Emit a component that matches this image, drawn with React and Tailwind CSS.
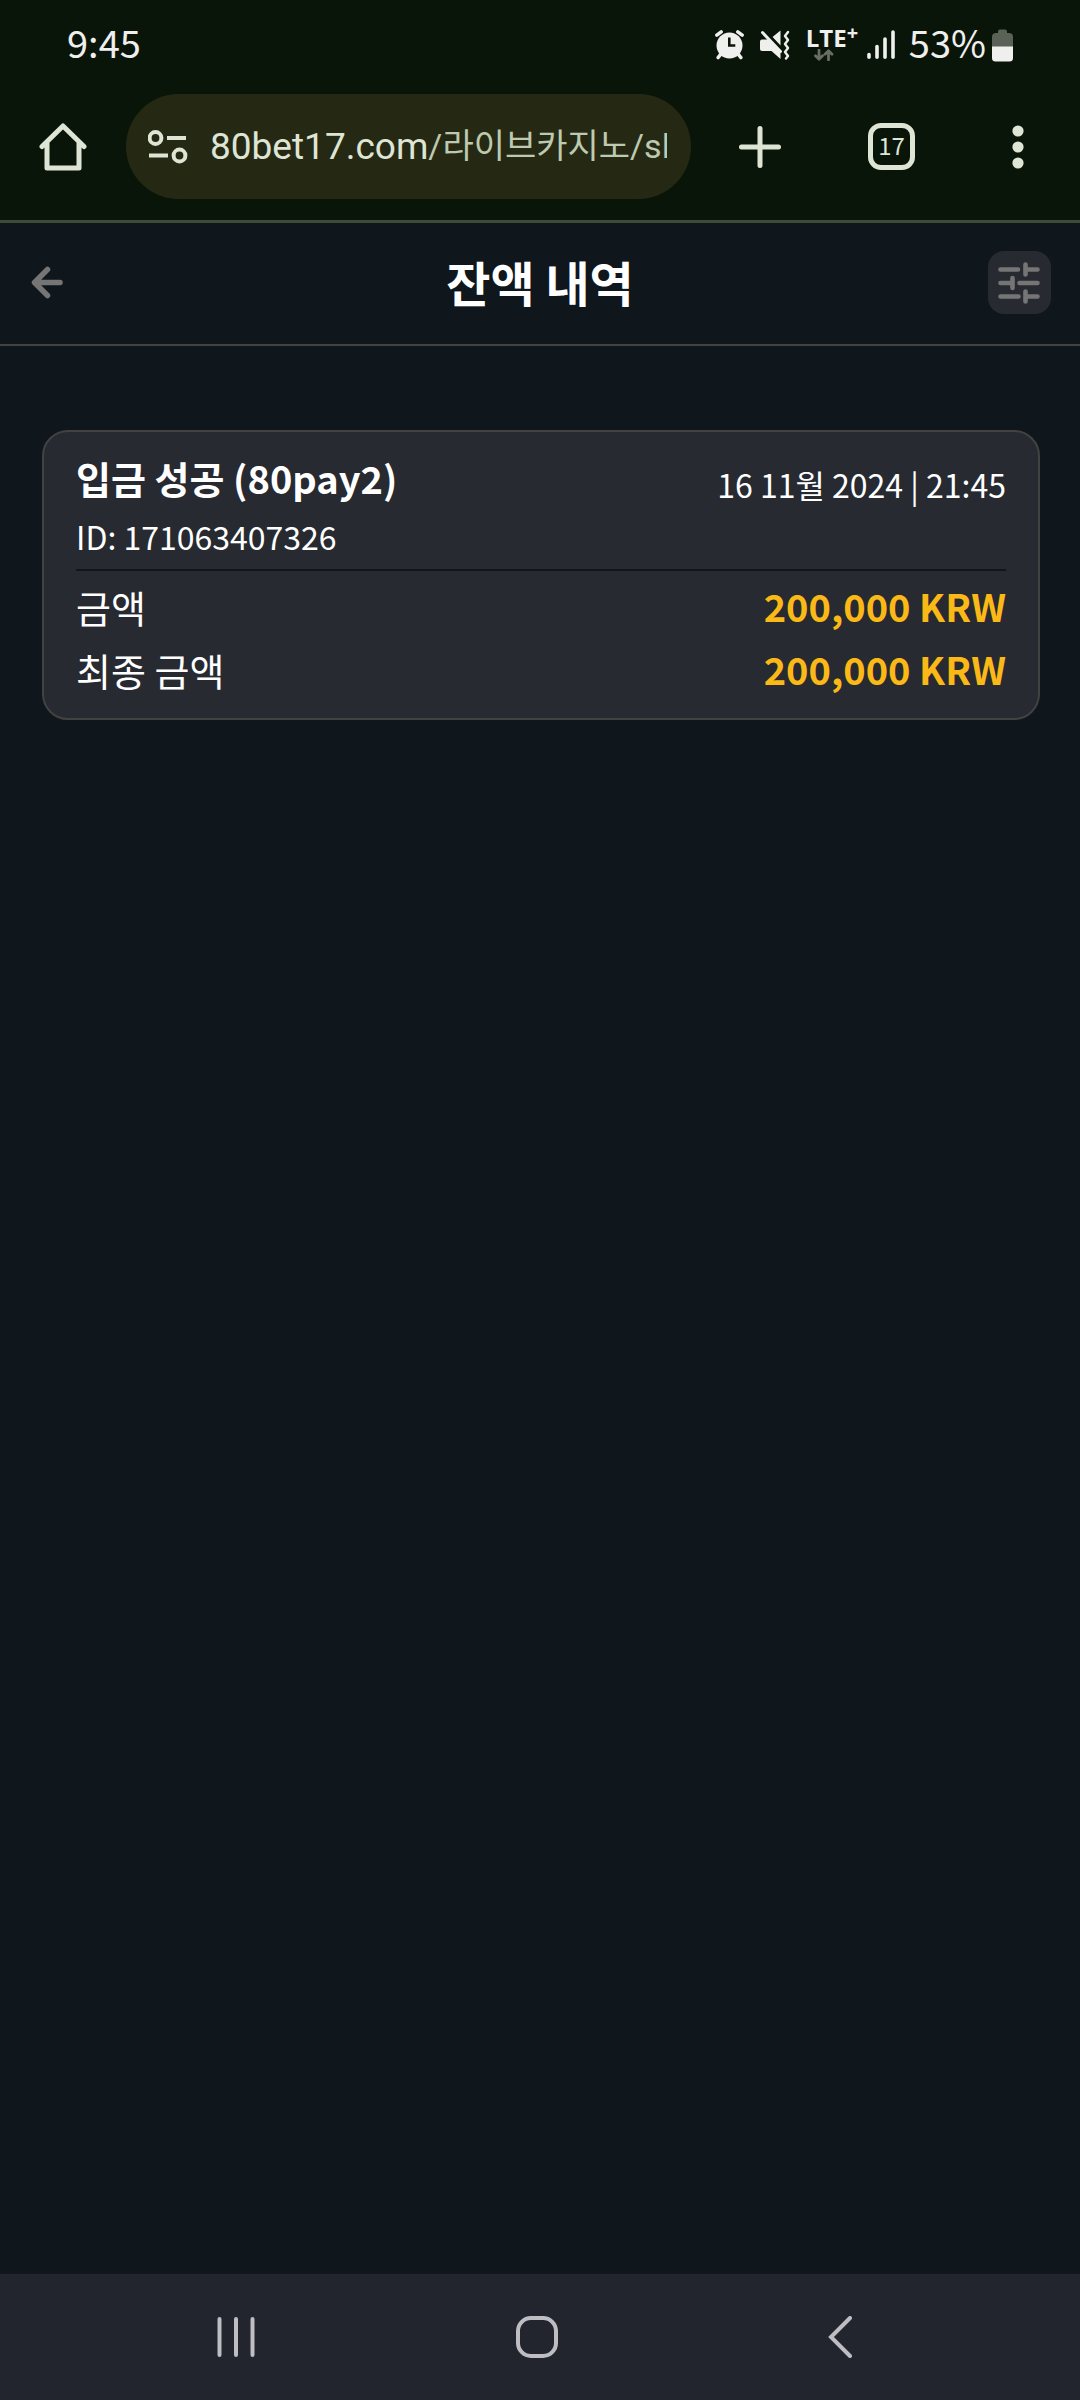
import React from "react";

const cjk = "font-['Noto_Sans_CJK_KR',sans-serif]";

function AlarmIcon() {
  return (
    <svg width="29" height="30" viewBox="0 0 29 30" fill="none" aria-hidden="true">
      <circle cx="14.5" cy="15.5" r="13" fill="#efefee" />
      <path d="M1.8 5.2 6.2 1.8M27.2 5.2l-4.4-3.4" stroke="#efefee" strokeWidth="3.4" strokeLinecap="round" />
      <path d="m5.5 24.5-2.3 3M23.5 24.5l2.3 3" stroke="#efefee" strokeWidth="3.6" strokeLinecap="round" />
      <path d="M14.3 7.5v8h6" stroke="#0a1509" strokeWidth="2.6" />
    </svg>
  );
}

function MuteVibrateIcon() {
  return (
    <svg width="30" height="30" viewBox="0 0 30 30" fill="none" aria-hidden="true">
      <path d="M20.5.5v15L12.5 7Z" fill="#efefee" />
      <path d="M2 9.5h6l12.5 13V29l-9-8H2Q0 21 0 19v-7.500Q0 9.500 2 9.500Z" fill="#efefee" />
      <path d="m2.500 2.500 18 19" stroke="#efefee" strokeWidth="3" strokeLinecap="round" />
      <path d="m8 4 13.500 14" stroke="#0a1509" strokeWidth="1.600" />
      <path d="m28 2-3 4 3 4-3 4 3 4-3 4 3 4-2 2.500" stroke="#efefee" strokeWidth="2.400" strokeLinecap="round" strokeLinejoin="round" />
    </svg>
  );
}

function DataArrows() {
  return (
    <svg width="20" height="12" viewBox="0 0 20 12" fill="none" stroke="#686d65" strokeWidth="2.800" strokeLinecap="round" strokeLinejoin="round" aria-hidden="true">
      <path d="M5 1v9M1.500 6.800 5 10.300l3.500-3.500M14.500 11V2M11 5.300l3.500-3.500L18 5.300" />
    </svg>
  );
}

function SignalIcon() {
  return (
    <svg width="28" height="30" viewBox="0 0 28 30" stroke="#efefee" strokeWidth="3.600" strokeLinecap="round" aria-hidden="true">
      <path d="M2 24.500v2.700M10 16.500v10.700M18 9v18.200M26 2v25.200" />
    </svg>
  );
}

function BatteryIcon() {
  return (
    <svg width="21" height="33" viewBox="0 0 21 33" aria-hidden="true">
      <path d="M6 4V2.500Q6 .5 8 .5h5q2 0 2 2V4h2q4 0 4 4v10H0V8q0-4 4-4Z" fill="#5a6156" />
      <path d="M0 17.500h21V29q0 3.500-3.500 3.500h-14Q0 32.500 0 29Z" fill="#efefee" />
    </svg>
  );
}

function StatusBar() {
  return (
    <div className={`flex h-[94px] items-center justify-between pr-[67px] pb-1 pl-[67px] text-[38px] leading-none text-[#efefee] ${cjk}`}>
      <time className="pb-1.5">9:45</time>
      <div className="flex items-center">
        <AlarmIcon />
        <span className="ml-4 flex"><MuteVibrateIcon /></span>
        <div className="ml-4 flex h-9 w-[51px] flex-col">
          <span className="flex items-start font-['Open_Sans',sans-serif] text-2xl leading-[22px] font-bold">
            LTE<span className="text-xl leading-3">+</span>
          </span>
          <span className="ml-2 flex"><DataArrows /></span>
        </div>
        <span className="ml-2.5 flex"><SignalIcon /></span>
        <span className="ml-3.5 pb-1.5">53%</span>
        <span className="ml-1.5 flex"><BatteryIcon /></span>
      </div>
    </div>
  );
}

function BrowserBar() {
  return (
    <div className="flex h-[105px] items-center text-[#dfe5d5]">
      <button aria-label="홈" className="flex w-[126px] justify-center">
        <svg width="48" height="48" viewBox="0 0 48 48" fill="none" stroke="currentColor" strokeWidth="5" strokeLinecap="round" strokeLinejoin="round" aria-hidden="true">
          <path d="M3 23.500 24 3l21 20.500M8 20v25h32V20" />
        </svg>
      </button>
      <div className="flex h-full min-w-0 flex-1 items-center rounded-full bg-[#252914] pr-6 pl-[22px]">
        <button aria-label="사이트 정보" className="shrink-0">
          <svg width="40" height="34" viewBox="0 0 40 34" fill="none" stroke="currentColor" strokeWidth="4" aria-hidden="true">
            <circle cx="7.500" cy="8" r="5.900" />
            <circle cx="31.500" cy="25.500" r="5.900" />
            <path d="M19 8h19M1 25.500h19" />
          </svg>
        </button>
        <label htmlFor="address" className="ml-[22px] shrink-0 font-['Roboto',sans-serif] text-[37px]">80bet17.com</label>
        <input
          id="address"
          defaultValue="/라이브카지노/sl"
          className="min-w-0 flex-1 bg-transparent font-['Roboto','Noto_Sans_CJK_KR',sans-serif] text-[34px] text-[#bdcab0] outline-none"
        />
      </div>
      <button aria-label="새 탭" className="flex w-[137px] justify-center">
        <svg width="42" height="42" viewBox="0 0 42 42" stroke="currentColor" strokeWidth="5" strokeLinecap="round" aria-hidden="true">
          <path d="M21 2.500v37M2.500 21h37" />
        </svg>
      </button>
      <button aria-label="탭 17개" className="flex w-[127px] justify-center">
        <span className="flex size-[47px] items-center justify-center rounded-[13px] border-5 border-current pb-1 font-['Noto_Sans_CJK_KR',sans-serif] text-2xl leading-none">17</span>
      </button>
      <button aria-label="메뉴" className="flex w-[125px] justify-center">
        <svg width="12" height="44" viewBox="0 0 12 44" fill="currentColor" aria-hidden="true">
          <circle cx="6" cy="6" r="5.600" />
          <circle cx="6" cy="22" r="5.600" />
          <circle cx="6" cy="38" r="5.600" />
        </svg>
      </button>
    </div>
  );
}

function PageHeader() {
  return (
    <header className="flex h-[123px] items-center justify-between border-b-2 border-[#424242] px-[29px] pb-0.5">
      <button aria-label="뒤로" className="flex size-[63px] items-center">
        <svg width="36" height="34" viewBox="0 0 36 34" fill="none" stroke="#757575" strokeWidth="5.500" strokeLinecap="round" strokeLinejoin="round" aria-hidden="true">
          <path d="M18.500 3.500 5.500 16.500l13 13M7 16.500h24" />
        </svg>
      </button>
      <h1 className="pb-1 text-5xl leading-none font-bold">잔액 내역</h1>
      <button aria-label="필터" className="flex size-[63px] items-center justify-center rounded-2xl bg-[#272a31]">
        <svg width="42" height="42" viewBox="0 0 42 42" fill="none" stroke="#757575" strokeWidth="4.600" strokeLinecap="round" aria-hidden="true">
          <path d="M2.500 7.500h17.500M27.500 2.500v10M27.500 7.500h12M2.500 21h12M14.500 16v10M21.500 21h18M2.500 34.500h18M27.500 29.500v10M27.500 34.500h12" />
        </svg>
      </button>
    </header>
  );
}

const amounts = [
  { label: "금액", value: "200,000 KRW" },
  { label: "최종 금액", value: "200,000 KRW" },
];

function TransactionCard() {
  return (
    <article className="mx-10 mt-[84px] ml-[42px] rounded-[26px] border-2 border-[#424242] bg-[#272a31] px-8 pt-4 pb-4">
      <div className="flex h-[123px] items-start justify-between border-b-2 border-[#0f161c]">
        <div>
          <h2 className="text-[38px] leading-[60px] font-bold">입금 성공 (80pay2)</h2>
          <p className="text-[32px] leading-[56px]">ID: 171063407326</p>
        </div>
        <time className="text-[32px] leading-[72px]">16 11월 2024 | 21:45</time>
      </div>
      <dl className="pt-[5px]">
        {amounts.map((row) => (
          <div key={row.label} className="flex h-[63px] items-center justify-between pb-0.5">
            <dt className="text-[38px] leading-none">{row.label}</dt>
            <dd className="pb-0.5 text-[38px] leading-none font-bold text-[#fbb917]">{row.value}</dd>
          </div>
        ))}
      </dl>
    </article>
  );
}

function NavBar() {
  return (
    <nav className="flex h-[126px] items-center justify-center bg-[#22252d] pr-[7px]">
      <button aria-label="최근 앱" className="flex flex-1 justify-end">
        <svg width="40" height="42" viewBox="0 0 40 42" stroke="#bdbdc2" strokeWidth="4" strokeLinecap="round" aria-hidden="true">
          <path d="M3.500 3v36M20 3v36M36.500 3v36" />
        </svg>
      </button>
      <button aria-label="홈 화면" className="mx-[260px] flex">
        <svg width="42" height="42" viewBox="0 0 42 42" fill="none" stroke="#bdbdc2" strokeWidth="4" aria-hidden="true">
          <rect x="2" y="2" width="38" height="38" rx="13" />
        </svg>
      </button>
      <button aria-label="뒤로 가기" className="flex flex-1">
        <svg width="42" height="42" viewBox="-9 0 42 42" fill="none" stroke="#bdbdc2" strokeWidth="4" strokeLinecap="round" aria-hidden="true">
          <path d="M23 2 4 21l19 19" />
        </svg>
      </button>
    </nav>
  );
}

export default function App() {
  return (
    <div className={`flex min-h-screen flex-col bg-[#0f161c] text-white ${cjk}`}>
      <div className="border-b-3 border-[#404a3a] bg-[#0a1509] pb-[21px]">
        <StatusBar />
        <BrowserBar />
      </div>
      <PageHeader />
      <main className="flex-1">
        <TransactionCard />
      </main>
      <NavBar />
    </div>
  );
}
